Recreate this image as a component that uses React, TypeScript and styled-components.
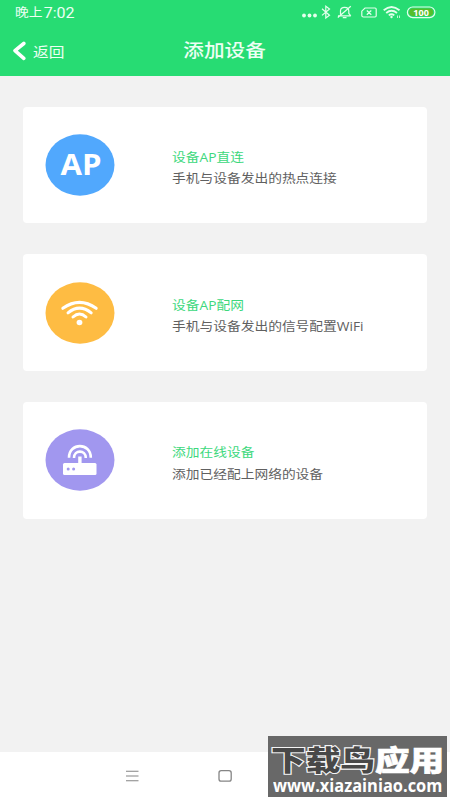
import React from "react";
import styled, { createGlobalStyle } from "styled-components";

const GlobalStyle = createGlobalStyle`
  * { box-sizing: border-box; }
  body { margin: 0; font-family: "Open Sans", "Noto Sans CJK SC", sans-serif; }
`;

const Screen = styled.div`
  position: relative;
  width: 450px;
  height: 800px;
  overflow: hidden;
  display: flex;
  flex-direction: column;
  background: #f2f2f2;
`;

const Header = styled.header`
  height: 76px;
  flex: none;
  background: #27dc73;
  color: #edfff3;
`;

const StatusBar = styled.div`
  height: 26px;
  padding: 0 14px 0 15px;
  display: flex;
  align-items: center;
  justify-content: space-between;
`;

/* Wide lettering: glyphs are drawn broader than they are tall. */
const WideText = styled.span<{ $size: number; $scale: number; $weight?: number }>`
  display: block;
  white-space: nowrap;
  font-size: ${(p) => p.$size}px;
  font-weight: ${(p) => p.$weight ?? 400};
  transform: scaleX(${(p) => p.$scale});
  transform-origin: left center;
`;

const Clock = styled(WideText)`
  display: flex;
  align-items: center;
  gap: 1px;
  line-height: 20px;
`;

const Digits = styled.span`
  font-family: Roboto, sans-serif;
  font-size: 14.2px;
`;

const StatusIcons = styled.svg`
  display: block;
  width: 140px;
  height: 26px;
`;

const TitleBar = styled.div`
  height: 50px;
  padding: 0 12px;
  display: grid;
  grid-template-columns: 1fr auto 1fr;
  align-items: center;
`;

const BackButton = styled.button`
  display: flex;
  align-items: center;
  gap: 7px;
  height: 48px;
  border: 0;
  padding: 0;
  color: inherit;
  font-family: inherit;
  background: none;

  svg { display: block; }
`;

const Title = styled.h1`
  margin: 0 0 2px;
  font-size: 18.3px;
  font-weight: 500;
  line-height: 26px;
  transform: scaleX(1.13);
`;

const Cards = styled.main`
  flex: 1;
  padding: 30.5px 23px;
  display: flex;
  flex-direction: column;
  gap: 31px;
`;

const Card = styled.section`
  height: 116.7px;
  padding-left: 22px;
  display: grid;
  grid-template-columns: 127px 1fr;
  align-items: center;
  border-radius: 4px;
  background: #fff;
`;

const CardIcon = styled.svg`
  display: block;
  width: 70px;
  height: 62px;
`;

const CardText = styled.div`
  line-height: 21.5px;
  padding-top: 7px;
`;

const CardTitle = styled(WideText)`
  color: #3cd87c;
`;

const CardDetail = styled(WideText)`
  color: #606060;
`;

const NavBar = styled.nav`
  height: 48px;
  flex: none;
  padding: 0 124px;
  display: flex;
  align-items: center;
  background: #fff;

  svg { display: block; }
`;

const Watermark = styled.div`
  position: absolute;
  left: 268px;
  top: 736px;
  width: 179px;
  height: 61px;
  padding: 9px 0 0 3px;
  overflow: hidden;
  background: #686868;
  color: #fff;
`;

const Brand = styled(WideText)`
  line-height: 31px;
  -webkit-text-stroke: 0.7px #fff;
`;

const BrandDark = styled.span`
  color: #484848;
  paint-order: stroke fill;
  -webkit-text-stroke: 2.2px #f4f4f4;
`;

const Address = styled(WideText)`
  line-height: 18px;
  margin: 1px 0 0 2px;
`;

const ApIcon = () => (
  <CardIcon viewBox="0 0 70 62">
    <ellipse cx="35" cy="31" rx="34.5" ry="30.7" fill="#51a8fd" />
    <text x="15.5" y="41" fill="#fff" fontFamily="Open Sans" fontSize="29" fontWeight="700" textLength="41" lengthAdjust="spacingAndGlyphs">
      AP
    </text>
  </CardIcon>
);

const WifiIcon = () => (
  <CardIcon viewBox="0 0 70 62">
    <ellipse cx="35" cy="31" rx="34.5" ry="30.7" fill="#febc43" />
    <g fill="none" stroke="#fff" strokeWidth="3" strokeLinecap="round">
      <path d="M17.8 26.3Q34.5 14.5 51.2 26.3" />
      <path d="M23 30.8Q34.5 21.4 46.2 30.8" />
      <path d="M28 35Q34.5 29 41 35" />
    </g>
    <ellipse cx="34.5" cy="40.5" rx="2.9" ry="2.7" fill="#fff" />
  </CardIcon>
);

const RouterIcon = () => (
  <CardIcon viewBox="0 0 70 62">
    <ellipse cx="35" cy="31" rx="34.5" ry="30.7" fill="#a197ef" />
    <g fill="none" stroke="#fff" strokeWidth="2.6">
      <path d="M24 28.7C24 13.3 45.8 13.3 45.8 28.7" />
      <path d="M29 29C29 20.5 40.8 20.5 40.8 29" />
    </g>
    <path d="M33.2 27.5h3.4V35h-3.4z" fill="#fff" />
    <rect x="18" y="34" width="33.5" height="12" rx="1.5" fill="#fff" />
    <circle cx="23.2" cy="40" r="1.5" fill="#a197ef" />
    <circle cx="28.6" cy="40" r="1.5" fill="#a197ef" />
  </CardIcon>
);

const options = [
  { icon: <ApIcon />, title: "设备AP直连", detail: "手机与设备发出的热点连接" },
  { icon: <WifiIcon />, title: "设备AP配网", detail: "手机与设备发出的信号配置WiFi" },
  { icon: <RouterIcon />, title: "添加在线设备", detail: "添加已经配上网络的设备" },
];

export default function App() {
  return (
    <>
      <GlobalStyle />
      <Screen>
        <Header>
          <StatusBar>
            <Clock $size={12.2} $scale={1.13}>
              晚上<Digits>7:02</Digits>
            </Clock>
            <StatusIcons viewBox="296 0 140 26" fill="none" stroke="#e4ffec" strokeWidth="1.2">
              <g fill="#e4ffec" stroke="none">
                <circle cx="304" cy="15.5" r="1.9" />
                <circle cx="309.5" cy="15.5" r="1.9" />
                <circle cx="315" cy="15.5" r="1.9" />
              </g>
              <path d="M322 8.8L329.5 15.3L325.8 18V6.3L329.5 9L322 15.4" />
              <path d="M338 15.8H350.8M340.5 14.5V10.5Q340.8 7.3 344.5 7.3Q348.8 7.3 348.8 11V13.5L350.8 15.8M342.8 17.6H346.5M337.8 17.5L350.8 6.2" />
              <path d="M365 8H375Q376.2 8 376.2 9.2V15.8Q376.2 17 375 17H363.5Q361.8 17 361.8 15.5V11.2Z M366.8 10.5L371.3 14.8M371.3 10.5L366.8 14.8" />
              <path d="M383.7 10.3Q391.5 3.7 399.5 10.3M386.2 13Q391.5 8.5 397 13M388.8 15.4Q391.5 13.2 394.3 15.4" strokeWidth="1.8" />
              <circle cx="391.5" cy="17" r="1.2" fill="#e4ffec" stroke="none" />
              <path d="M397.5 18V15.5M399.5 18V15.5" strokeWidth="0.8" />
              <rect x="407.4" y="7" width="27.5" height="10.6" rx="5.3" />
              <rect x="409.2" y="8.6" width="23.9" height="7.4" rx="3.7" fill="#55bd2b" stroke="none" />
              <text x="413.3" y="15.6" fill="#fff" stroke="none" fontFamily="Open Sans" fontSize="8.8" fontWeight="700" textLength="15.5" lengthAdjust="spacingAndGlyphs">100</text>
            </StatusIcons>
          </StatusBar>
          <TitleBar>
            <BackButton>
              <svg width="14" height="20" viewBox="0 0 14 20" fill="none" stroke="#fff" strokeWidth="3.6" strokeLinecap="round" strokeLinejoin="round">
                <path d="M11.8 2.5L3 9.6L11.8 17.3" />
              </svg>
              <WideText $size={14} $scale={1.12}>返回</WideText>
            </BackButton>
            <Title>添加设备</Title>
          </TitleBar>
        </Header>
        <Cards>
          {options.map((o) => (
            <Card key={o.title}>
              {o.icon}
              <CardText>
                <CardTitle $size={12.2} $scale={1.127}>{o.title}</CardTitle>
                <CardDetail $size={12.2} $scale={1.127}>{o.detail}</CardDetail>
              </CardText>
            </Card>
          ))}
        </Cards>
        <NavBar>
          <svg width="110" height="16" viewBox="124 768 110 16" fill="none" stroke="#858585">
            <path d="M126 771.3H138.5M126 776H138.5M126 780.7H138.5" strokeWidth="1.1" />
            <rect x="219" y="770.7" width="12.2" height="10.5" rx="2.2" strokeWidth="1.3" />
          </svg>
        </NavBar>
        <Watermark>
          <Brand $size={28.5} $scale={1.215} $weight={900}>
            <BrandDark>下载鸟</BrandDark>应用
          </Brand>
          <Address $size={17} $scale={0.965} $weight={700}>www.xiazainiao.com</Address>
        </Watermark>
      </Screen>
    </>
  );
}
